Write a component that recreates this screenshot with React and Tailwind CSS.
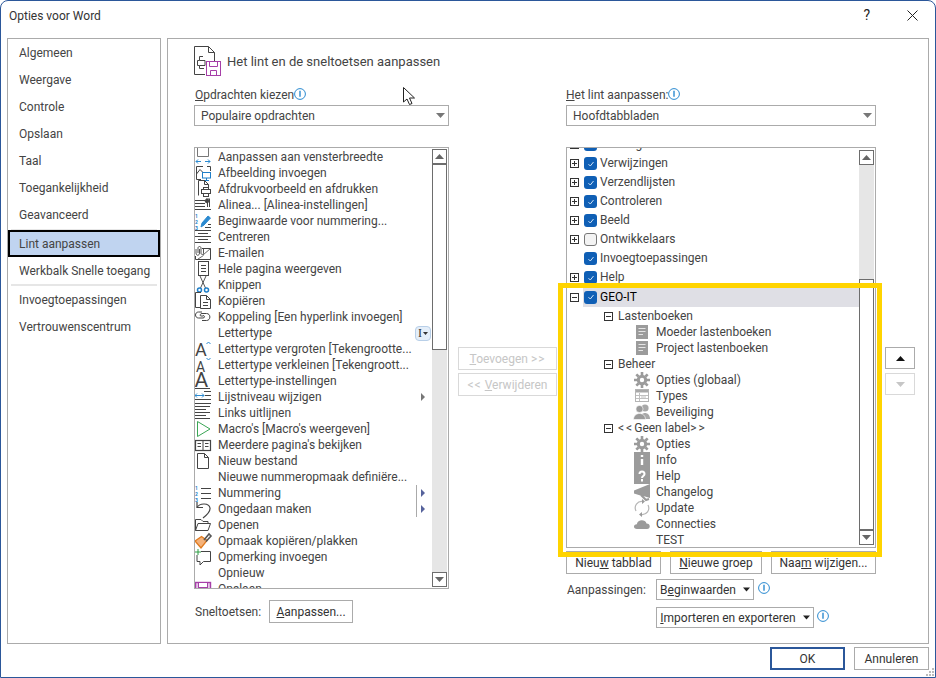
import React from "react";

const FONT = "font-['Roboto',sans-serif]";

// 16px icon box for the ribbon command lists
const Ic = ({ children }) => (
  <svg viewBox="0 0 16 16" className="w-4 h-4 shrink-0 overflow-visible" fill="none" stroke="#444" strokeWidth="1">
    {children}
  </svg>
);

const Digits = () => (
  <>
    <text x="0" y="4.5" fontSize="5" fill="#1f7fc8" stroke="none" fontWeight="700">1</text>
    <text x="0" y="10.5" fontSize="5" fill="#1f7fc8" stroke="none" fontWeight="700">2</text>
    <text x="0" y="16.5" fontSize="5" fill="#1f7fc8" stroke="none" fontWeight="700">3</text>
  </>
);

const leftIcons = {
  fit: <Ic><path d="M2.5 -2V7.5H13.5V-2" stroke="#777" /><path d="M1 12.5H6M3 10.5L1 12.5L3 14.5M10 12.5H15M13 10.5L15 12.5L13 14.5" stroke="#2b8ad0" /></Ic>,
  pic: <Ic><path d="M8 1.5H1.5V14.5H6M1.5 9L5 4.5L8 7.5M12 1.5H15.5V6" /><rect x="7.5" y="7.5" width="8" height="5.5" stroke="#1f7fc8" /><path d="M9 15.5H14M11.5 13V15" stroke="#1f7fc8" /></Ic>,
  print: <Ic><path d="M3.5 14.5V-0.5H9.5L13.5 3.5V7M9.5 -0.5V3.5H13.5" /><rect x="6.5" y="8.5" width="9" height="4" /><rect x="8.5" y="6.5" width="5" height="2" /><rect x="8.5" y="12.5" width="5" height="3" /></Ic>,
  para: <Ic><path d="M0 3.5H10M0 6.5H10M0 9.5H10M0 12.5H16" /><path d="M11 2H15M12.5 2V10M14.5 2V10" /><circle cx="12" cy="4" r="1.8" fill="#444" /></Ic>,
  num: <Ic><Digits /><path d="M6 14L7 10L13 3L15.5 5L9 12Z" fill="#2b8ad0" stroke="#2b8ad0" /><path d="M10 14.5H16M13 11.5H16" /></Ic>,
  center: <Ic><path d="M0 1.5H16M3 4.5H13M0 7.5H16M3 10.5H13M0 13.5H16" /></Ic>,
  mail: <Ic><path d="M7 3.5H15.5V14.5H0.5V11" /><path d="M8 10L15.5 3.5M3 14L8.5 10.5" strokeWidth=".8" /><path d="M3 8V3C3 1 6 1 6 3V8C6 10 8.5 10 8.5 8V4M1 4V8C1 11 4.5 11 4.5 8V4" strokeWidth=".9" /></Ic>,
  page: <Ic><rect x="3.5" y="0.5" width="10" height="14" /><path d="M6 4.5H11M6 7.5H11M6 10.5H11" /></Ic>,
  cut: <Ic><path d="M5 -1L10.5 11M11 -1L5.5 11" stroke="#555" /><circle cx="4.5" cy="13" r="2" stroke="#1f7fc8" strokeWidth="1.5" /><circle cx="11.5" cy="13" r="2" stroke="#1f7fc8" strokeWidth="1.5" /></Ic>,
  copy: <Ic><path d="M5 14.5H0.5V-0.5H6" /><path d="M5.5 15.5V2.5H11.5L15.5 6.5V15.5ZM11.5 2.5V6.5H15.5M8 9.5H13M8 12.5H13" /></Ic>,
  link: <Ic><path d="M7 3H3.5C-0.5 3 -0.5 9 3.5 9H8C10 9 10 6.5 8 6.5" /><path d="M8 7H6C4.5 7 5 4.5 7 4.5H11.5C16 4.5 16 11.5 11.5 11.5H7" /></Ic>,
  grow: <Ic><text x="0" y="15" fontSize="18" fill="#444" stroke="none" fontFamily="Roboto">A</text><path d="M11.5 3L13.5 1L15.5 3" stroke="#2b8ad0" /></Ic>,
  shrink: <Ic><text x="1" y="15" fontSize="14" fill="#444" stroke="none" fontFamily="Roboto">A</text><path d="M11.5 1L13.5 3L15.5 1" stroke="#2b8ad0" /></Ic>,
  font: <Ic><text x="-0.5" y="14" fontSize="21" fill="#444" stroke="none" fontFamily="Roboto">A</text><path d="M0 15.5H15" /></Ic>,
  level: <Ic><path d="M9 2.5H16M10 6.5H16M0 10.5H16M0 14.5H16" /><path d="M0 6.5H9M2 4.5L0 6.5L2 8.5M7 4.5L9 6.5L7 8.5" stroke="#2b8ad0" /></Ic>,
  left: <Ic><path d="M0 1.5H15M0 4.5H11M0 7.5H15M0 10.5H11M0 13.5H15" /></Ic>,
  play: <Ic><path d="M2.5 0.5V15.5L15 8Z" stroke="#3aa655" /></Ic>,
  book: <Ic><rect x="0.5" y="3.5" width="15" height="10" strokeWidth="1.2" /><path d="M8 3.5V13.5M2.5 6.5H6M2.5 9.5H6M10 6.5H13.5M10 9.5H13.5" /></Ic>,
  file: <Ic><path d="M2.5 15.5V0.5H9.5L13.5 4.5V15.5ZM9.5 0.5V4.5H13.5" /></Ic>,
  list: <Ic><Digits /><path d="M6 3.5H16M6 8.5H16M6 13.5H16" /></Ic>,
  undo: <Ic><path d="M2 1V6.5H8" strokeWidth="1.2" /><path d="M2 6.5C5 1.5 14 2 15 7C15.5 11 12 14 8 17" strokeWidth="1.2" /></Ic>,
  open: <Ic><path d="M0.5 13.5V2.5H6L8 4.5H13V6.5M0.5 13.5L3 6.5H15.5L13 13.5Z" /></Ic>,
  brush: <Ic><path d="M0 8L6 15L12 7.5L6.5 3.5Z" fill="#f4b27a" stroke="#e07b20" strokeWidth="1.4" /><path d="M9 7L14 1L16 3L11 8.5" stroke="#555" strokeWidth="1.6" /></Ic>,
  comment: <Ic><path d="M6 2.5H15.5V12.5H8.5L5 16V12.5H2V6" /><path d="M3 0V6M0 3H6" stroke="#2f9e44" /></Ic>,
  save: <Ic><rect x="0.5" y="1.5" width="15" height="15" fill="#e6c6e8" stroke="#a63fa8" strokeWidth="1.4" /><rect x="3.5" y="1.5" width="9" height="5" fill="#fff" stroke="#a63fa8" /></Ic>,
};

const leftRows = [
  ["Aanpassen aan vensterbreedte", "fit"],
  ["Afbeelding invoegen", "pic"],
  ["Afdrukvoorbeeld en afdrukken", "print"],
  ["Alinea... [Alinea-instellingen]", "para"],
  ["Beginwaarde voor nummering...", "num"],
  ["Centreren", "center"],
  ["E-mailen", "mail"],
  ["Hele pagina weergeven", "page"],
  ["Knippen", "cut"],
  ["Kopiëren", "copy"],
  ["Koppeling [Een hyperlink invoegen]", "link"],
  ["Lettertype", null, "tool"],
  ["Lettertype vergroten [Tekengrootte...", "grow"],
  ["Lettertype verkleinen [Tekengroott...", "shrink"],
  ["Lettertype-instellingen", "font"],
  ["Lijstniveau wijzigen", "level", "arrow"],
  ["Links uitlijnen", "left"],
  ["Macro's [Macro's weergeven]", "play"],
  ["Meerdere pagina's bekijken", "book"],
  ["Nieuw bestand", "file"],
  ["Nieuwe nummeropmaak definiëre...", null],
  ["Nummering", "list", "split"],
  ["Ongedaan maken", "undo", "split"],
  ["Openen", "open"],
  ["Opmaak kopiëren/plakken", "brush"],
  ["Opmerking invoegen", "comment"],
  ["Opnieuw", null],
  ["Opslaan", "save"],
];

const G = "#9b9b9b";
const Gear = () => (
  <Ic>
    <circle cx="8" cy="8" r="3.7" stroke={G} strokeWidth="3" />
    <path d="M8 0V3M8 13V16M0 8H3M13 8H16M2.3 2.3L4.5 4.5M11.5 11.5L13.7 13.7M13.7 2.3L11.5 4.5M4.5 11.5L2.3 13.7" stroke={G} strokeWidth="2.6" />
  </Ic>
);
const grayIcons = {
  doc: (
    <Ic>
      <rect x="2" y="1" width="12" height="14" fill={G} stroke="none" />
      <path d="M4.5 4.5H11.5M4.5 7.5H11.5M4.5 10.5H9" stroke="#e4e4e4" />
    </Ic>
  ),
  gear: <Gear />,
  table: (
    <Ic>
      <rect x="1.5" y="1.5" width="13" height="12" stroke="#b5b5b5" />
      <rect x="2" y="2" width="12" height="2.5" fill="#a8a8a8" stroke="none" />
      <path d="M5.5 5V13M2 7.5H14M2 10.5H14M7 9H12" stroke="#c0c0c0" />
    </Ic>
  ),
  people: (
    <Ic>
      <circle cx="11" cy="4" r="3.6" fill="#a8a8a8" stroke="none" />
      <path d="M6 15C6 7 16 7 16 15Z" fill="#a8a8a8" stroke="none" />
      <circle cx="5.5" cy="5" r="3.6" fill={G} stroke="#fff" strokeWidth=".6" />
      <path d="M-0.5 15.5C-0.5 7.5 11.5 7.5 11.5 15.5Z" fill={G} stroke="#fff" strokeWidth=".6" />
    </Ic>
  ),
  info: (
    <Ic>
      <rect x="0" y="0" width="16" height="16" fill={G} stroke="none" />
      <path d="M8 3V5M8 7V13" stroke="#fff" strokeWidth="2.4" />
    </Ic>
  ),
  help: (
    <Ic>
      <rect x="0" y="0" width="16" height="16" fill={G} stroke="none" />
      <path d="M5.5 6C5.5 2.5 10.5 2.5 10.5 6C10.5 8 8 8 8 10M8 11V13.5" stroke="#fff" strokeWidth="2" />
    </Ic>
  ),
  mega: (
    <Ic>
      <path d="M0 6.5L16 0V14L11 12.5L8 12L0 9.5Z" fill={G} stroke="none" />
      <path d="M7 11L12 16L15 15" stroke={G} strokeWidth="2" />
    </Ic>
  ),
  sync: (
    <Ic>
      <path d="M2 11C-0.5 6 3.5 1 8.5 1.5" stroke="#b5b5b5" strokeWidth="1.2" />
      <path d="M14 5C16.5 10 12.5 15 7.5 14.5" stroke="#b5b5b5" strokeWidth="1.2" />
      <path d="M8 -1L11 1.5L8 4ZM8 12L5 14.5L8 17Z" fill={G} stroke="none" />
    </Ic>
  ),
  cloud: (
    <Ic>
      <path d="M3 13C-1 13 -1 8.5 2.8 8.3C3.5 3 11.5 3 12.5 7.5C16.8 7.5 16.8 13 13 13Z" fill={G} stroke="none" />
    </Ic>
  ),
};

const Info = ({ className = "" }) => (
  <svg viewBox="0 0 12 12" className={`w-3 h-3 shrink-0 ${className}`} fill="none">
    <circle cx="6" cy="6" r="5.4" stroke="#2b8ad0" strokeWidth="1" />
    <path d="M6 2.8V8.8" stroke="#2b8ad0" strokeWidth="1.4" />
  </svg>
);

const Caret = ({ down = true, color = "#777", size = "w-[9px]" }) => (
  <svg viewBox="0 0 9 5" className={`${size} h-[5px] shrink-0`}>
    <path d={down ? "M0 0H9L4.5 5Z" : "M0 5H9L4.5 0Z"} fill={color} />
  </svg>
);

const Combo = ({ children }) => (
  <div className="h-[21px] border border-[#ababab] bg-white flex items-center justify-between pl-[6px] pr-[3px]">
    <span>{children}</span>
    <Caret />
  </div>
);

const Btn = ({ children, className = "", disabled }) => (
  <div
    className={`h-[23px] border flex items-center justify-center whitespace-nowrap ${
      disabled ? "border-[#d9d9d9] text-[#c6c6c6]" : "border-[#ababab] text-[#333]"
    } ${className}`}
  >
    {children}
  </div>
);

const ScrollBtn = ({ down = false }) => (
  <div className="h-[15px] shrink-0 border border-[#6d6d6d] bg-white flex items-center justify-center">
    <Caret down={down} color="#666" />
  </div>
);

const Scrollbar = ({ thumbTop, thumbHeight, className = "" }) => (
  <div className={`w-[15px] shrink-0 flex flex-col bg-[#e6e6e6] ${className}`}>
    <ScrollBtn />
    {thumbTop > 0 && <div className="shrink-0" style={{ height: thumbTop }} />}
    <div className="shrink-0 bg-white border border-[#6d6d6d]" style={{ height: thumbHeight }} />
    <div className="flex-1" />
    <ScrollBtn down />
  </div>
);

const RowEnd = ({ kind }) => {
  if (kind === "tool")
    return (
      <div className="ml-auto mr-[1px] w-4 h-[15px] rounded-sm border border-[#b8cfe8] bg-[#e4eef9] flex items-center justify-center gap-[1px] text-[#333] leading-none">
        <span className="text-[12px] font-['Liberation_Serif',serif]">I</span>
        <Caret size="w-[5px]" color="#333" />
      </div>
    );
  if (kind === "arrow")
    return (
      <div className="ml-auto mr-[7px]">
        <div className="w-0 h-0 border-y-[4px] border-y-transparent border-l-[4px] border-l-[#777]" />
      </div>
    );
  if (kind === "split")
    return (
      <div className="ml-auto mr-[7px] h-4 flex items-center gap-[4px]">
        <div className="w-px h-4 bg-[#aaa]" />
        <div className="w-0 h-0 border-y-[4px] border-y-transparent border-l-[4px] border-l-[#56639c]" />
      </div>
    );
  return null;
};

const Check = ({ on = true }) =>
  on ? (
    <div className="w-[13px] h-[13px] shrink-0 rounded-[3px] bg-[#0f5fb5] flex items-center justify-center">
      <svg viewBox="0 0 8 8" className="w-2 h-2" fill="none">
        <path d="M1.5 4.2L3.3 6L6.5 2" stroke="#cfe3f7" strokeWidth="1" />
      </svg>
    </div>
  ) : (
    <div className="w-[13px] h-[13px] shrink-0 rounded-[3px] bg-[#f3f3f3] border border-[#777]" />
  );

const Expander = ({ open }) => (
  <svg viewBox="0 0 9 9" className="w-[9px] h-[9px] shrink-0" fill="none" stroke="#333">
    <rect x="0.5" y="0.5" width="8" height="8" />
    <path d={open ? "M2 4.5H7" : "M2 4.5H7M4.5 2V7"} />
  </svg>
);

const TabRow = ({ label, on = true, exp = "plus", active }) => (
  <div className={`flex items-center shrink-0 pl-[3px] ${active ? "h-5" : "h-[19px]"}`}>
    <div className="w-[9px] shrink-0 flex">{exp && <Expander open={exp === "minus"} />}</div>
    <div className={`flex items-center ml-[4px] flex-1 pl-[1px] h-full ${active ? "bg-[#dfdfe5] text-black" : ""}`}>
      <Check on={on} />
      <span className="ml-[3px] pb-px">{label}</span>
    </div>
  </div>
);

const GroupRow = ({ label }) => (
  <div className="h-4 flex items-center pl-[37px]">
    <Expander open />
    <span className="ml-[5px]">{label}</span>
  </div>
);

const ItemRow = ({ label, icon }) => (
  <div className="h-4 flex items-center pl-[67px]">
    <div className="w-4 h-4 shrink-0">{icon && grayIcons[icon]}</div>
    <span className="ml-[6px]">{label}</span>
  </div>
);

const tabs = [
  ["Indeling"],
  ["Verwijzingen"],
  ["Verzendlijsten"],
  ["Controleren"],
  ["Beeld"],
  ["Ontwikkelaars", false],
  ["Invoegtoepassingen", true, null],
  ["Help"],
];

const navTop = ["Algemeen", "Weergave", "Controle", "Opslaan", "Taal", "Toegankelijkheid", "Geavanceerd"];

const NavItem = ({ children, active, className = "" }) => (
  <div className={`h-[27px] flex items-center ${active ? "bg-[#c0d4f0] border-2 border-black pl-[9px]" : "pl-[11px]"} ${className}`}>
    {children}
  </div>
);

export default function App() {
  return (
    <div className={`relative w-[936px] h-[678px] bg-white border border-[#2b579a] rounded-t-lg overflow-hidden text-[12px] text-[#444] ${FONT}`}>
      {/* Titelbalk */}
      <div className="h-[37px] flex items-center justify-between pl-2 pr-[17px] text-[#333]">
        <span className="pb-[7px]">Opties voor Word</span>
        <div className="flex items-center gap-[37px] pb-[9px]">
          <span className="text-[14px] text-[#222]">?</span>
          <svg viewBox="0 0 11 11" className="w-[11px] h-[11px]" fill="none" stroke="#222"><path d="M0.5 0.5L10.5 10.5M10.5 0.5L0.5 10.5" /></svg>
        </div>
      </div>

      <div className="flex gap-[6px] px-[6px]">
        {/* Linker menu */}
        <div className="w-[154px] h-[606px] border border-[#ababab] pt-px shrink-0">
          {navTop.map((n) => (
            <NavItem key={n} className="pb-px">{n}</NavItem>
          ))}
          <div className="h-px mx-[3px] bg-[#e6e6e6]" />
          <NavItem active>Lint aanpassen</NavItem>
          <NavItem>Werkbalk Snelle toegang</NavItem>
          <div className="h-[2px] mx-[3px] bg-[#e6e6e6]" />
          <NavItem>Invoegtoepassingen</NavItem>
          <NavItem>Vertrouwenscentrum</NavItem>
        </div>

        {/* Hoofdpaneel */}
        <div className="w-[762px] h-[606px] border border-[#ababab] pl-[26px] pt-[7px]">
          <div className="h-[31px] flex items-center">
            <svg viewBox="0 0 28 31" className="w-7 h-[31px] shrink-0" fill="none" stroke="#444">
              <path d="M20.5 15V6.5L14.5 0.5H0.5V28.5H11M14.5 0.5V6.5H20.5" />
              <path d="M9 10.5H5.5V14.5H3.5V19.5H5.5V22.5H10M5.5 14.5H11V19.5H5.5" />
              <rect x="12.5" y="15.5" width="14" height="14" stroke="#a63fa8" />
              <path d="M15.5 15.5V20.5H23.5V15.5M16.5 29.5V24.5H22.5V29.5" stroke="#a63fa8" />
            </svg>
            <span className="ml-[5px] text-[13px] text-[#444]">Het lint en de sneltoetsen aanpassen</span>
          </div>

          <div className="flex mt-[9px]">
            {/* Opdrachten */}
            <div className="w-[255px] shrink-0">
              <div className="h-[19px] flex items-start pl-px">
                <span><u>O</u>pdrachten kiezen</span>
                <Info className="mt-[2px]" />
              </div>
              <Combo>Populaire opdrachten</Combo>
              <div className="mt-[21px] h-[442px] border border-[#ababab] flex overflow-hidden">
                <div className="flex-1 min-w-0 pt-px overflow-hidden">
                  {leftRows.map(([label, icon, end]) => (
                    <div key={label} className="h-4 flex items-center whitespace-nowrap">
                      <div className="w-4 h-4 shrink-0">{icon && leftIcons[icon]}</div>
                      <span className="ml-[7px]">{label}</span>
                      <RowEnd kind={end} />
                    </div>
                  ))}
                </div>
                <Scrollbar className="my-px mr-px" thumbTop={0} thumbHeight={186} />
              </div>
              <div className="mt-[11px] h-[23px] flex items-center pl-px">
                <span className="w-[74px]">Sneltoetsen:</span>
                <Btn className="w-[84px]"><span><u>A</u>anpassen...</span></Btn>
              </div>
            </div>

            {/* Toevoegen / verwijderen */}
            <div className="w-[99px] ml-[9px] shrink-0 pt-[261px] flex flex-col gap-[3px]">
              <Btn disabled><span><u>T</u>oevoegen <span className="tracking-[1px]">&gt;&gt;</span></span></Btn>
              <Btn disabled><span><span className="tracking-[1px]">&lt;&lt;</span> <u>V</u>erwijderen</span></Btn>
            </div>

            {/* Lint */}
            <div className="w-[310px] ml-[9px] shrink-0">
              <div className="h-[19px] flex items-start">
                <span><u>H</u>et lint aanpassen:</span>
                <Info className="mt-[2px]" />
              </div>
              <Combo>Hoofdtabbladen</Combo>
              <div className="mt-[21px] h-[401px] border border-[#ababab] flex overflow-hidden">
                <div className="flex-1 min-w-0 overflow-hidden whitespace-nowrap">
                  <div className="-mt-[13px]">
                    {tabs.map(([label, on, exp]) => (
                      <TabRow key={label} label={label} on={on} exp={exp === null ? null : "plus"} />
                    ))}
                    <TabRow label="GEO-IT" exp="minus" active />
                  </div>
                  <div className="mt-px">
                    <GroupRow label="Lastenboeken" />
                    <ItemRow label="Moeder lastenboeken" icon="doc" />
                    <ItemRow label="Project lastenboeken" icon="doc" />
                    <GroupRow label="Beheer" />
                    <ItemRow label="Opties (globaal)" icon="gear" />
                    <ItemRow label="Types" icon="table" />
                    <ItemRow label="Beveiliging" icon="people" />
                    <GroupRow label={<><span className="tracking-[2px]">&lt;&lt;</span>Geen label<span className="tracking-[2px]">&gt;&gt;</span></>} />
                    <ItemRow label="Opties" icon="gear" />
                    <ItemRow label="Info" icon="info" />
                    <ItemRow label="Help" icon="help" />
                    <ItemRow label="Changelog" icon="mega" />
                    <ItemRow label="Update" icon="sync" />
                    <ItemRow label="Connecties" icon="cloud" />
                    <ItemRow label="TEST" />
                  </div>
                </div>
                <Scrollbar className="my-[2px] mr-px" thumbTop={114} thumbHeight={251} />
              </div>
              <div className="mt-[3px] flex justify-between">
                <Btn className="w-[95px]"><span>Nieu<u>w</u> tabblad</span></Btn>
                <Btn className="w-[92px]"><span><u>N</u>ieuwe groep</span></Btn>
                <Btn className="w-[105px]"><span>Naa<u>m</u> wijzigen...</span></Btn>
              </div>
              <div className="mt-[5px] flex items-center h-[21px]">
                <span className="w-[90px] pl-px">Aanpassingen:</span>
                <Btn className="!h-[21px] w-[98px] gap-[7px]"><span>B<u>e</u>ginwaarden</span><Caret color="#222" size="w-[7px]" /></Btn>
                <Info className="ml-[4px] -mt-[3px]" />
              </div>
              <div className="mt-[7px] flex items-center h-[21px] pl-[90px]">
                <Btn className="!h-[21px] w-[158px] gap-[7px]"><span><u>I</u>mporteren en exporteren</span><Caret color="#222" size="w-[7px]" /></Btn>
                <Info className="ml-[3px] -mt-[3px]" />
              </div>
            </div>

            {/* Omhoog / omlaag */}
            <div className="w-[30px] ml-[9px] shrink-0 pt-[261px] flex flex-col gap-[4px]">
              <Btn className="!h-[22px]"><Caret down={false} color="#111" /></Btn>
              <Btn disabled className="!h-[22px]"><Caret color="#c6c6c6" /></Btn>
            </div>
          </div>
        </div>
      </div>

      {/* Knoppen onderaan */}
      <div className="flex justify-end gap-[9px] pt-[3px] pr-[6px]">
        <Btn className="w-[75px] !border-2 !border-[#2b579a]">OK</Btn>
        <Btn className="w-[75px]">Annuleren</Btn>
      </div>

      {/* Gele markering uit de schermafbeelding */}
      <div className="absolute left-[557px] top-[282px] w-[324px] h-[274px] border-[5px] border-[#ffd400] pointer-events-none" />

      {/* Muisaanwijzer */}
      <svg viewBox="0 0 13 19" className="absolute left-[402px] top-[86px] w-[13px] h-[19px]">
        <path d="M0.5 0.5V15L4 12L6.5 17.5L9 16.5L6.5 11H11.5Z" fill="#fff" stroke="#222" />
      </svg>

      {/* Formaatgreep */}
      <svg viewBox="0 0 10 10" className="absolute right-0 bottom-0 w-[10px] h-[10px]" fill="#bbb">
        <rect x="7" y="1" width="2" height="2" /><rect x="4" y="4" width="2" height="2" /><rect x="7" y="4" width="2" height="2" />
        <rect x="1" y="7" width="2" height="2" /><rect x="4" y="7" width="2" height="2" /><rect x="7" y="7" width="2" height="2" />
      </svg>
    </div>
  );
}
